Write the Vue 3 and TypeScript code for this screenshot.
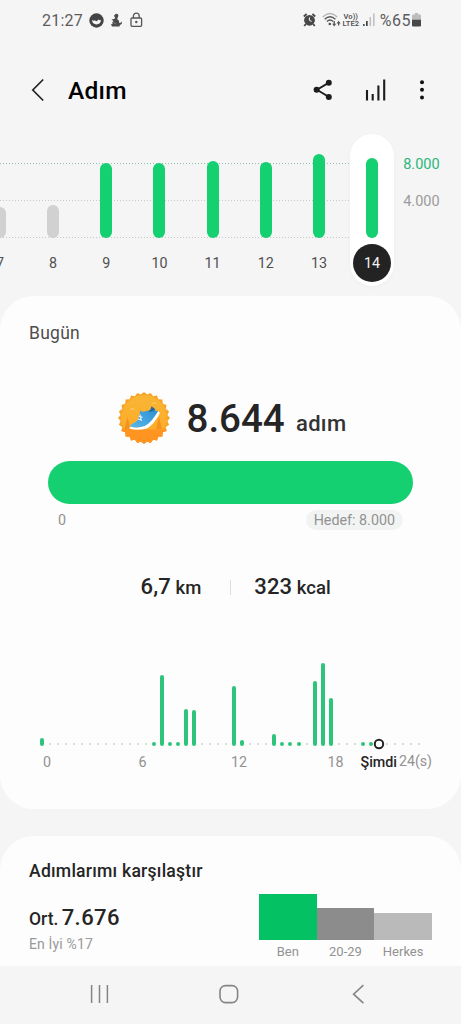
<script setup lang="ts">
interface Day { label: string; height: number; reached: boolean; selected?: boolean }
interface Group { label: string; height: number; tone: string }

const days: Day[] = [
  { label: '7', height: 31, reached: false },
  { label: '8', height: 33, reached: false },
  { label: '9', height: 75, reached: true },
  { label: '10', height: 75, reached: true },
  { label: '11', height: 77, reached: true },
  { label: '12', height: 76, reached: true },
  { label: '13', height: 84, reached: true },
  { label: '14', height: 80.5, reached: true, selected: true },
]

// Bar height per half-hour slot; slots that are not listed have no steps.
const activity: Record<number, number> = {
  0: 8, 14: 4, 15: 71, 16: 4, 17: 4, 18: 37, 19: 36, 24: 59.5, 25: 5.5, 29: 11.5,
  30: 4, 31: 4, 32: 4, 34: 65, 35: 82.5, 36: 48, 40: 4, 41: 4,
}
const nowSlot = 42
const slots = Array.from({ length: 48 }, (_, i) => ({ i, height: activity[i] ?? 0 }))

const groups: Group[] = [
  { label: 'Ben', height: 46, tone: 'me' },
  { label: '20-29', height: 32, tone: 'age' },
  { label: 'Herkes', height: 27, tone: 'all' },
]

// Serrated outline of the medal.
const teeth = 24
const medal = Array.from({ length: teeth * 2 }, (_, i) => {
  const r = i % 2 === 0 ? 26 : 23.6
  const a = (Math.PI * i) / teeth - Math.PI / 2
  return `${(27 + r * Math.cos(a)).toFixed(2)},${(27 + r * Math.sin(a)).toFixed(2)}`
}).join(' ')
</script>

<template>
  <div class="screen">
    <div class="status">
      <span class="clock">21:27</span>
      <svg class="s-face" width="15" height="15" viewBox="0 0 15 15">
        <circle cx="7.5" cy="7.5" r="7.2" fill="#444" />
        <path d="M3 7Q5 8.2 6 7.2Q7.5 9.4 9.4 6.6Q10.6 7.8 12 7Q11.6 11.4 7.5 11.4Q3.4 11.4 3 7Z" fill="#f5f5f5" />
      </svg>
      <svg class="s-figure" width="13" height="15" viewBox="0 0 13 15">
        <path d="M5.2 1.2Q7.2.2 8.2 1.8Q8.8 3.2 7.7 4.4L7.2 6Q9.6 7.4 9.3 10Q11 10.4 11.8 8.6Q12.6 11.4 9.8 12L9.6 13.4H2.2L.8 11.4L2.6 11Q1.6 9.4 3.4 8L1.4 6.6L4.3 6L5.2 4.2L3.8 3Z" fill="#4b4b4b" />
        <path d="M3.5 9.4L6.3 11.2" stroke="#999" stroke-width=".7" />
      </svg>
      <svg class="s-lock" width="13" height="16" viewBox="0 0 13 16" fill="none" stroke="#555" stroke-width="1.3">
        <rect x="1" y="6" width="10.6" height="8.3" rx="1" />
        <path d="M3.4 6V4.1a2.9 2.9 0 0 1 5.8 0V6" />
        <circle cx="6.3" cy="10" r="1.2" fill="#555" stroke="none" />
      </svg>
      <span class="grow"></span>
      <svg class="s-alarm" width="13" height="14" viewBox="0 0 13 14">
        <circle cx="6.5" cy="7.3" r="5.4" fill="#484848" />
        <path d="M.8 3.5L3.6 1M12.2 3.5L9.4 1M2.9 11L1.2 13M10.1 11L11.8 13" stroke="#484848" stroke-width="1.8" />
        <path d="M6.4 4.4V7.4L8.7 8.4" fill="none" stroke="#f5f5f5" stroke-width="1" />
      </svg>
      <svg class="s-wifi" width="19" height="16" viewBox="0 0 19 16" fill="none">
        <path d="M.8 5Q8 -1.8 15.2 5" stroke="#b4b4b4" stroke-width="1.4" />
        <path d="M2.7 7.2Q8 2.2 13.4 7.2M4.9 9.5Q8 6.5 11.2 9.5" stroke="#555" stroke-width="1.4" />
        <circle cx="7.8" cy="12" r="1.3" fill="#555" />
        <path d="M12.2 9V13M16.6 13.6V10" stroke="#555" stroke-width="1.3" />
        <path d="M10.2 11.8h4l-2 2.7zM14.6 11.4h4l-2-2.7z" fill="#555" />
      </svg>
      <div class="volte"><span>Vo))</span><span>LTE2</span></div>
      <svg class="s-signal" width="12" height="14" viewBox="0 0 12 14">
        <rect x="0" y="11" width="1.7" height="2" fill="#555" />
        <rect x="3" y="8" width="1.7" height="5" fill="#444" />
        <rect x="6.5" y="4" width="1.6" height="9" fill="#c2c2c2" />
        <rect x="10" y="0.5" width="1.6" height="12.5" fill="#c2c2c2" />
      </svg>
      <span class="pct">%65</span>
      <svg class="s-batt" width="9" height="14" viewBox="0 0 9 14">
        <path d="M2.8 0H6.2V1.5H8Q9 1.5 9 2.5V7H0V2.5Q0 1.5 1 1.5H2.8Z" fill="#bcbcbc" />
        <path d="M0 6.7H9V12.4Q9 13.4 8 13.4H1Q0 13.4 0 12.4Z" fill="#484848" />
      </svg>
    </div>

    <header class="bar">
      <svg class="back" width="14" height="24" viewBox="0 0 14 24" fill="none" stroke="#222" stroke-width="1.7">
        <path d="M12.2 1.5L1.8 12L12.2 22.5" />
      </svg>
      <h1>Adım</h1>
      <span class="grow"></span>
      <svg class="share" width="20" height="22" viewBox="0 0 20 22">
        <path d="M16 3.6L4 10.8L16 18" fill="none" stroke="#1c1c1c" stroke-width="1.9" />
        <circle cx="15.8" cy="3.7" r="3" fill="#1c1c1c" />
        <circle cx="3.6" cy="10.8" r="3" fill="#1c1c1c" />
        <circle cx="15.8" cy="17.9" r="3" fill="#1c1c1c" />
      </svg>
      <svg class="trend" width="22" height="24" viewBox="0 0 22 24" stroke="#1c1c1c" stroke-width="2.1">
        <path d="M2 12V22.6M7.7 16V22.6M13.4 7.4V22.6M19.2 1.4V22.6" />
      </svg>
      <svg class="more" width="6" height="22" viewBox="0 0 6 22" fill="#111">
        <circle cx="3" cy="3.2" r="2" /><circle cx="3" cy="10.8" r="2" /><circle cx="3" cy="18.4" r="2" />
      </svg>
    </header>

    <section class="week">
      <svg class="lines" width="352" height="78" viewBox="0 0 352 78" fill="none" stroke-width="1" stroke-dasharray="1 2">
        <path d="M0 1.5H352" stroke="#8cc4a8" />
        <path d="M0 38.5H352M0 75.5H352" stroke="#c8c8c8" />
      </svg>
      <div class="days">
        <div v-for="d in days" :key="d.label" class="day" :class="{ selected: d.selected }">
          <div class="track">
            <i :class="{ reached: d.reached }" :style="{ height: d.height + 'px' }"></i>
          </div>
          <span>{{ d.label }}</span>
        </div>
      </div>
      <div class="scale"><span class="goal">8.000</span><span>4.000</span></div>
    </section>

    <section class="card today">
      <h2>Bugün</h2>
      <div class="total">
        <svg width="54" height="54" viewBox="0 0 54 54">
          <defs>
            <linearGradient id="sun" x1="0" y1="0" x2="0" y2="1">
              <stop offset="0" stop-color="#f9b535" /><stop offset="1" stop-color="#ffa925" />
            </linearGradient>
            <linearGradient id="shoe" x1="0" y1="1" x2="1" y2="0">
              <stop offset="0" stop-color="#57b9ee" /><stop offset="1" stop-color="#2b8bcf" />
            </linearGradient>
            <clipPath id="disc"><polygon :points="medal" /></clipPath>
          </defs>
          <polygon :points="medal" fill="#f7a325" />
          <g clip-path="url(#disc)">
            <circle cx="27" cy="27" r="23" fill="url(#sun)" />
            <path d="M0 39Q14 37 27 38T54 38V54H0Z" fill="#ff9420" />
            <path d="M10.5 26L13.5 38H7.5ZM42 26L45 38H39Z" fill="#f3921f" />
            <path d="M12.5 18.5Q15.5 16 18.5 18.5ZM34 12.8Q37 10 40 12.8Z" fill="#ffcb68" />
          </g>
          <path d="M13 35.5Q21 38 28 34.5Q34 30 41 20L43 22Q37 33.5 30 37.4Q20 40 12.4 37.4Z" fill="#fff" />
          <path d="M13 35.4Q14 33 19 31Q23 27 23 19.6Q26 21.8 29.5 20Q33.5 20 34.6 15.4L38.2 18.2L37.8 19.4L41 20.2Q34.5 31.5 28 34.8Q20.5 38 13 35.4Z" fill="url(#shoe)" />
          <path d="M34.6 15.4L38.2 18.2Q36 21.6 31.2 20.6Q34 19 34.6 15.4Z" fill="#23699c" />
          <path d="M21.7 25.5L25.5 26.2M20.8 28L24.4 29M23 23.5L24.4 30" stroke="#e9f7ff" stroke-width="1.1" />
        </svg>
        <strong>8.644</strong>
        <span>adım</span>
      </div>
      <div class="progress"></div>
      <div class="range"><span>0</span><span class="target">Hedef: 8.000</span></div>
      <div class="stats">
        <div><b>6,7</b> km</div>
        <hr />
        <div><b>323</b> kcal</div>
      </div>
      <div class="hours">
        <div v-for="s in slots" :key="s.i" class="slot">
          <svg v-if="s.i === nowSlot" class="now" width="12" height="12" viewBox="0 0 12 12">
            <circle cx="6" cy="6" r="4.2" fill="#fff" stroke="#232323" stroke-width="2" />
          </svg>
          <i v-else-if="s.height" :style="{ height: s.height + 'px' }"></i>
          <u v-else></u>
        </div>
      </div>
      <div class="ticks">
        <span>0</span><span>6</span><span>12</span><span>18</span><b>Şimdi</b><span class="end">24(s)</span>
      </div>
    </section>

    <section class="card compare">
      <div class="mine">
        <h3>Adımlarımı karşılaştır</h3>
        <p class="avg">Ort. <b>7.676</b></p>
        <p class="rank">En İyi %17</p>
      </div>
      <div class="groups">
        <div v-for="g in groups" :key="g.label" class="group">
          <i :class="g.tone" :style="{ height: g.height + 'px' }"></i>
          <span>{{ g.label }}</span>
        </div>
      </div>
    </section>

    <nav class="nav">
      <svg width="20" height="20" viewBox="0 0 20 20" stroke="#858585" stroke-width="1.5"><path d="M1.6 1V19M9.5 1V19M17.4 1V19" /></svg>
      <svg width="20" height="20" viewBox="0 0 20 20" fill="none" stroke="#858585" stroke-width="1.6"><rect x="1" y="1.6" width="17.6" height="17" rx="5.5" /></svg>
      <svg width="20" height="20" viewBox="0 0 20 20" fill="none" stroke="#858585" stroke-width="1.6"><path d="M15.4 1.2L5.6 10.2L15.4 19.2" /></svg>
    </nav>
  </div>
</template>

<style>
html, body { margin: 0; background: #f5f5f5; }
</style>

<style scoped>
.screen {
  width: 461px; height: 1024px; overflow: hidden;
  display: flex; flex-direction: column; background: #f5f5f5;
  font-family: Roboto, "Liberation Sans", sans-serif; color: #252525;
}
.screen, .screen *, .screen *::before { box-sizing: border-box; }
svg { display: block; flex: none; }
h1, h2, h3, p { margin: 0; font-weight: 500; }
.grow { flex: 1; }

.status { height: 40px; flex: none; display: flex; align-items: center; padding: 0 40px 0 42px; color: #5c5c5c; }
.clock, .pct { margin-top: 1px; font-size: 16px; line-height: 20px; letter-spacing: .2px; }
.clock { width: 47px; }
.s-figure { margin-left: 6px; }
.s-lock { margin-left: 7px; }
.s-wifi { margin-left: 6px; }
.volte { width: 18px; margin-left: 1px; display: flex; flex-direction: column; align-items: center; font-size: 7.6px; line-height: 7.5px; font-weight: 600; color: #555; }
.s-signal { margin-left: 3px; }
.pct { margin-left: 5px; letter-spacing: .5px; }
.s-batt { margin-left: 1px; }

.bar { height: 100px; flex: none; display: flex; align-items: center; padding: 0 36px 0 31px; }
h1 { margin: 1px 0 0 23px; font-size: 24.5px; line-height: 30px; letter-spacing: .25px; color: #000; }
.trend { margin-left: 32px; }
.more { margin-left: 32px; }

.week { position: relative; height: 156px; flex: none; margin-top: -10px; display: flex; }
.lines { position: absolute; left: 0; top: 32px; }
.days { position: relative; flex: none; width: 425.3px; margin-left: -26.6px; padding-top: 4px; display: flex; }
.day { width: 53.17px; display: flex; flex-direction: column; align-items: center; }
.track { width: 44px; height: 104px; display: flex; align-items: flex-end; justify-content: center; }
.track i { width: 12px; border-radius: 6px; background: #d1d1d1; }
.track i.reached { background: #14d070; }
.day span { width: 38px; height: 38px; margin-top: 6px; border-radius: 50%; font-size: 14.3px; line-height: 39px; text-align: center; color: #505050; }
.day.selected { position: relative; z-index: 0; }
.day.selected::before { content: ""; position: absolute; z-index: -1; top: 0; left: 4.5px; width: 44px; height: 152px; border-radius: 22px; background: #fff; box-shadow: 0 1px 5px rgba(0, 0, 0, .03); }
.day.selected span { background: #232323; color: #f3f3f3; }
.scale { margin-left: 4.5px; padding-top: 25px; font-size: 14.5px; line-height: 20px; color: #9b9b9b; display: flex; flex-direction: column; gap: 17px; }
.scale .goal { color: #2bb67a; }

.card { flex: none; background: #fdfdfd; border-radius: 34px; }
.today { height: 513px; margin-top: 10px; display: flex; flex-direction: column; }
h2 { margin: 26px 0 0 29px; font-size: 17.5px; line-height: 23px; letter-spacing: .25px; font-weight: 400; color: #4e4e4e; }
.total { height: 54px; margin: 46px 0 0 117px; display: flex; align-items: center; }
.total strong { width: 97px; margin: 2px 0 0 15.5px; font-size: 38.5px; line-height: 54px; font-weight: 500; }
.total span { margin: 12px 0 0 12.5px; font-size: 22px; line-height: 30px; letter-spacing: .3px; font-weight: 500; color: #333; }
.progress { height: 43px; margin: 16px 48px 0; border-radius: 22px; background: #14d070; }
.range { height: 20px; margin: 6px 58px 0; display: flex; justify-content: space-between; font-size: 14.3px; line-height: 20px; color: #929292; }
.target { padding: 0 8px; border-radius: 10px; background: #f2f3f3; }
.stats { height: 30px; margin-top: 42px; display: flex; align-items: center; padding-left: 140.5px; font-size: 18.5px; line-height: 30px; font-weight: 500; }
.stats b { font-size: 22px; font-weight: 500; letter-spacing: .15px; }
.stats hr { width: 1px; height: 15px; border: 0; margin: 0 23px 0 29px; background: #ddd; }
.hours { height: 90px; margin: 53.5px 0 0 38px; display: flex; align-items: flex-end; }
.slot { width: 8.03px; height: 90px; display: flex; align-items: flex-end; justify-content: center; }
.slot i { width: 4px; border-radius: 2px; background: #2fc47c; }
.slot u { width: 2px; height: 2px; margin-bottom: 1px; border-radius: 1px; background: #cecece; }
.slot .now { margin-bottom: -4px; }
.ticks { display: grid; grid-template-columns: 94px 97px 96px 97px; grid-auto-flow: column; justify-content: start; height: 20px; margin-top: 6.5px; font-size: 14.3px; line-height: 20px; text-align: center; color: #929292; }
.ticks b { margin-left: -23.5px; color: #252525; font-weight: 500; }
.ticks .end { margin: -1px 0 0 2px; font-size: 14.2px; }

.compare { height: 130px; margin-top: 27px; border-radius: 34px 34px 0 0; display: flex; padding: 0 29px; justify-content: space-between; }
.mine { width: 180px; }
h3 { margin-top: 24px; font-size: 17.6px; line-height: 22px; letter-spacing: .22px; white-space: nowrap; }
.avg { margin-top: 22px; font-size: 17.5px; line-height: 28px; }
.avg b { margin-left: -1px; font-size: 22px; font-weight: 500; letter-spacing: .4px; }
.rank { font-size: 14px; line-height: 20px; letter-spacing: .15px; margin-top: 1px; font-weight: 400; color: #999; }
.groups { display: flex; align-items: flex-end; height: 126px; }
.group { width: 57.7px; display: flex; flex-direction: column; }
.group span { margin-top: 2px; height: 20px; font-size: 13px; line-height: 20px; text-align: center; color: #929292; }
.me { background: #04c164; }
.age { background: #8c8c8c; }
.all { background: #bababa; }

.nav { height: 58px; flex: none; display: flex; align-items: center; justify-content: center; gap: 109px; background: #f5f5f5; padding: 0 4px 2px 0; }
</style>
